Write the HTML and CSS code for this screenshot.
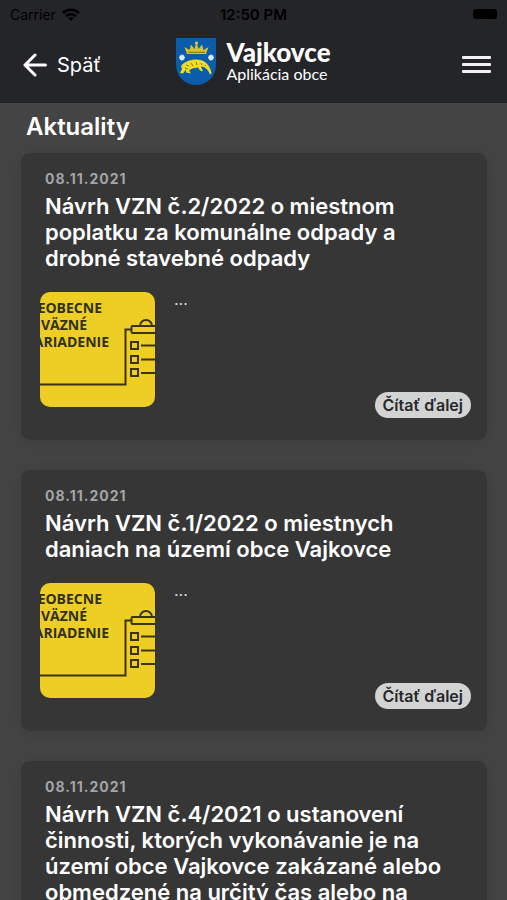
FILE: index.html
```html
<!DOCTYPE html>
<html lang="sk">
<head>
    <meta charset="UTF-8">
    <meta name="viewport" content="width=device-width, initial-scale=1.0">
    <title>Vajkovce</title>
    <link rel="stylesheet" href="styles.css">
</head>
<body>
<!-- shared thumbnail drawing -->
<svg class="defs" width="0" height="0" aria-hidden="true">
    <symbol id="clipboard" viewBox="0 0 115 115">
        <g fill="none" stroke="#3a3310" stroke-width="2">
            <path d="M0 92.500H85.500V37.500H91"/>
            <path d="M116 34H92.500a1 1 0 0 0-1 1v5a1 1 0 0 0 1 1H116"/>
            <path d="M100 34a6 6 0 0 1 12 0"/>
            <path d="M91 50h7v7h-7zM91 64h7v7h-7zM91 77h7v7h-7z"/>
            <path d="M101 53.500h15M101 67.500h15M101 81h15"/>
        </g>
    </symbol>
</svg>

<header class="header">
    <div class="status">
        <span class="carrier">Carrier
            <svg width="18" height="13" viewBox="0 0 18 13" fill="none" stroke="#000" stroke-width="2.600">
                <path d="M1 5a11.500 11.500 0 0 1 16 0M4 8.200a7.200 7.200 0 0 1 10 0"/>
                <path d="M6.300 10.200a4 4 0 0 1 5.400 0L9 13z" fill="#000" stroke="none"/>
            </svg>
        </span>
        <span class="clock">12:50 PM</span>
        <span class="battery"></span>
    </div>
    <nav class="navbar">
        <a class="back" href="#">
            <svg width="24" height="24" viewBox="0 0 24 24" fill="none" stroke="#fff" stroke-width="3" stroke-linecap="round" stroke-linejoin="round">
                <path d="M12 2L2 12l10 10M2 12h20.500"/>
            </svg>
            Späť
        </a>
        <a class="brand" href="#">
            <svg width="40" height="47" viewBox="0 0 40 47">
                <path d="M0 0h40v27a20 20 0 0 1-40 0z" fill="#0a5cac"/>
                <path d="M11 16L8.500 9l5 3L15 6.500l3.500 4.500L20.500 4l2 7L26 6.500l1.500 5.500 5-3L30 16z" fill="#d9c22c"/>
                <path d="M12 14.300h17" stroke="#7c7320" stroke-width="1"/>
                <circle cx="20.500" cy="5" r="1.600" fill="#e8cf2c"/>
                <path d="M6 16.500v6M3 19.500h6M4 17.500l4 4M8 17.500l-4 4M35 16.500v6M32 19.500h6M33 17.500l4 4M37 17.500l-4 4" stroke="#dcebf8" stroke-width="1.500"/>
                <path d="M4 35l2-4-1-3c3-4 9-6.500 15-6.500 9 0 14.500 6 15.500 14l-1.500 1c-2-5-5-8-9-8l2 5-3-1-2-3-6 1-3 2 2 3-5-1v-3l-3 4z" fill="#f0dc22"/>
                <path d="M10 27l3 1M15 25l2 3M20 24l1 3M25 25l1 2M29 27l1 1M9 30l3 1" stroke="#7c7a22" stroke-width="1"/>
            </svg>
            <span class="brand-text">
                <strong>Vajkovce</strong>
                <span>Aplikácia obce</span>
            </span>
        </a>
        <button class="menu" type="button" aria-label="Menu">
            <span></span>
            <span></span>
            <span></span>
        </button>
    </nav>
</header>

<main class="content">
    <h1>Aktuality</h1>

    <article class="card">
        <time datetime="2021-11-08">08.11.2021</time>
        <h2>Návrh VZN č.2/2022 o miestnom poplatku za komunálne odpady a drobné stavebné odpady</h2>
        <div class="card-body">
            <svg class="thumb" viewBox="0 0 115 115">
                <text x="62" y="21">EOBECNE</text>
                <text x="47" y="38">VÄZNÉ</text>
                <text x="69" y="55">ARIADENIE</text>
                <use href="#clipboard"/>
            </svg>
            <p>...</p>
            <button class="more" type="button">Čítať ďalej</button>
        </div>
    </article>

    <article class="card">
        <time datetime="2021-11-08">08.11.2021</time>
        <h2>Návrh VZN č.1/2022 o miestnych daniach na území obce Vajkovce</h2>
        <div class="card-body">
            <svg class="thumb" viewBox="0 0 115 115">
                <text x="62" y="21">EOBECNE</text>
                <text x="47" y="38">VÄZNÉ</text>
                <text x="69" y="55">ARIADENIE</text>
                <use href="#clipboard"/>
            </svg>
            <p>...</p>
            <button class="more" type="button">Čítať ďalej</button>
        </div>
    </article>

    <article class="card">
        <time datetime="2021-11-08">08.11.2021</time>
        <h2>Návrh VZN č.4/2021 o ustanovení činnosti, ktorých vykonávanie je na území obce Vajkovce zakázané alebo obmedzené na určitý čas alebo na</h2>
    </article>
</main>
</body>
</html>
```
FILE: styles.css
```css
* {
    box-sizing: border-box;
}
body {
    margin: 0;
    height: 100vh;
    display: flex;
    flex-direction: column;
    overflow: hidden;
    background-color: #444;
    color: #fff;
    font-family: Inter, "Liberation Sans", sans-serif;
}
.defs {
    position: absolute;
}
.header {
    flex: none;
    background-color: #242529;
}
.status {
    display: grid;
    grid-template-columns: 1fr auto 1fr;
    align-items: center;
    height: 28px;
    padding: 0 10px;
    color: #000;
    font-size: 14px;
}
.carrier {
    display: flex;
    align-items: center;
    gap: 6px;
}
.clock {
    font-size: 15px;
    font-weight: 600;
}
.battery {
    justify-self: end;
    width: 24px;
    height: 10px;
    border-radius: 3px;
    background-color: #000;
}
.navbar {
    display: grid;
    grid-template-columns: 1fr auto 1fr;
    align-items: center;
    height: 75px;
    padding: 0 16px 2px;
}
.navbar a {
    color: #fff;
    text-decoration: none;
}
.back {
    display: flex;
    align-items: center;
    gap: 10px;
    padding-left: 7px;
    font-size: 20px;
}
.brand {
    display: flex;
    align-items: center;
    gap: 10px;
    padding-bottom: 6px;
}
.brand-text {
    display: flex;
    flex-direction: column;
    font-family: Lato, "Liberation Sans", sans-serif;
    font-size: 16px;
    line-height: 20px;
}
.brand-text strong {
    font-size: 26px;
    font-weight: 900;
    line-height: 24px;
}
.menu {
    justify-self: end;
    display: flex;
    flex-direction: column;
    gap: 4px;
    padding: 0;
    border: none;
    background: none;
    cursor: pointer;
}
.menu span {
    width: 29px;
    height: 3px;
    border-radius: 1px;
    background-color: #f4f1f6;
}
.content {
    flex: 1;
    min-height: 0;
    overflow-y: auto;
    scrollbar-width: none;
    padding: 9px 20px 0 21px;
}
h1 {
    margin: 0 5px 11px;
    font-size: 24px;
    font-weight: 600;
    line-height: 30px;
}
.card {
    margin-bottom: 30px;
    padding: 16px 16px 22px 19px;
    border-radius: 9px;
    background-color: #363636;
    box-shadow: 0 2px 16px rgba(0, 0, 0, 0.12);
}
.card time {
    display: block;
    margin-left: 5px;
    color: #a4a4a4;
    font-size: 14px;
    font-weight: 700;
    line-height: 20px;
    letter-spacing: 1px;
}
.card h2 {
    margin: 4px 5px 21px;
    font-size: 22px;
    font-weight: 600;
    line-height: 26px;
}
.card-body {
    display: flex;
    align-items: flex-start;
    gap: 19px;
}
.card-body p {
    flex: 1;
    margin: 0;
    color: #ddd;
    font-size: 16px;
    line-height: 14px;
}
.thumb {
    width: 115px;
    height: 115px;
    border-radius: 10px;
    background-color: #eece24;
}
.thumb text {
    fill: #30301c;
    font-family: "Open Sans", sans-serif;
    font-size: 14px;
    font-weight: 700;
    text-anchor: end;
}
.more {
    height: 26px;
    margin-top: 100px;
    padding: 0 8px;
    border: none;
    border-radius: 13px;
    background-color: #d2d3d3;
    color: #27272b;
    font-family: inherit;
    font-size: 16px;
    font-weight: 600;
    cursor: pointer;
}
```
